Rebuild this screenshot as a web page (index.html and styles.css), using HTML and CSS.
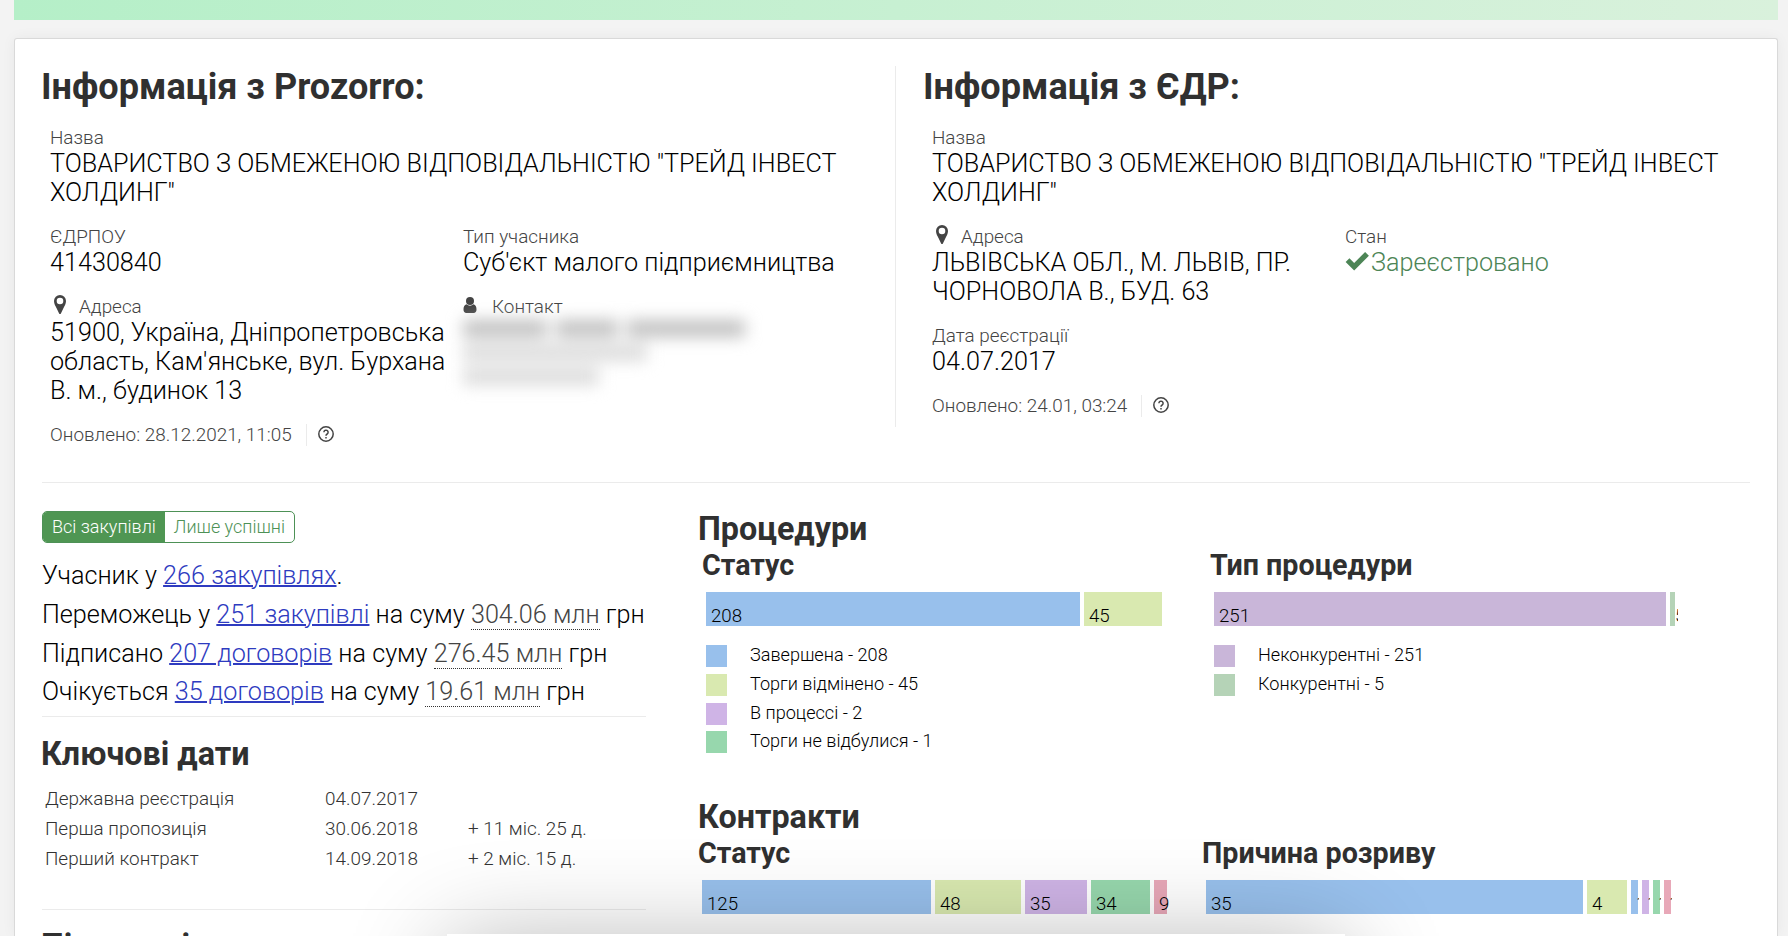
FILE: index.html
```html
<!DOCTYPE html>
<html lang="uk">
<head>
    <meta charset="UTF-8">
    <meta name="viewport" content="width=device-width, initial-scale=1.0">
    <title>Учасник 41430840</title>
    <link rel="stylesheet" href="styles.css">
</head>
<body>

    <div class="banner"></div>

    <div class="card">
        <div class="info">
            <section class="source">
                <h1>Інформація з Prozorro:</h1>
                <div class="fields">
                    <div class="field wide">
                        <label>Назва</label>
                        <p>ТОВАРИСТВО З ОБМЕЖЕНОЮ ВІДПОВІДАЛЬНІСТЮ "ТРЕЙД ІНВЕСТ ХОЛДИНГ"</p>
                    </div>
                    <div class="field">
                        <label>ЄДРПОУ</label>
                        <p>41430840</p>
                    </div>
                    <div class="field">
                        <label>Тип учасника</label>
                        <p>Суб'єкт малого підприємництва</p>
                    </div>
                    <div class="field">
                        <label><svg class="pin" viewBox="0 0 12 19"><path fill-rule="evenodd" d="M6 0a6 6 0 0 1 6 6c0 3-1.500 5-2.600 7.300L6.900 18.400a1 1 0 0 1-1.800 0L2.600 13.300C1.500 11 0 9 0 6a6 6 0 0 1 6-6zM6 2.700a3.300 3.300 0 1 0 0 6.600a3.300 3.300 0 0 0 0-6.600z"/></svg>Адреса</label>
                        <p>51900, Україна, Дніпропетровська область, Кам'янське, вул. Бурхана В. м., будинок 13</p>
                    </div>
                    <div class="field">
                        <label><svg class="user" viewBox="0 0 13 16"><circle cx="6.500" cy="4" r="4"/><path d="M3 7.200a5 5 0 0 0 7 0c2.300.4 3 2.800 3 5.600 0 2-1.100 3.200-2.800 3.200H2.800C1.100 16 0 14.800 0 12.800 0 10 .7 7.600 3 7.200z"/></svg>Контакт</label>
                        <div class="hidden-contact">
                            <div class="row"><i></i><i></i><i></i></div>
                            <div class="row light"><i></i></div>
                            <div class="row light short"><i></i></div>
                        </div>
                    </div>
                    <div class="updated wide">
                        <span>Оновлено: 28.12.2021, 11:05</span>
                        <svg class="help" viewBox="0 0 16 16"><circle cx="8" cy="8" r="7.200"/><path d="M5.900 6.200a2.100 2.100 0 1 1 3.300 1.800C8.400 8.500 8 8.900 8 9.700"/><path d="M8 11v1.500"/></svg>
                    </div>
                </div>
            </section>

            <section class="source">
                <h1>Інформація з ЄДР:</h1>
                <div class="fields">
                    <div class="field wide">
                        <label>Назва</label>
                        <p>ТОВАРИСТВО З ОБМЕЖЕНОЮ ВІДПОВІДАЛЬНІСТЮ "ТРЕЙД ІНВЕСТ ХОЛДИНГ"</p>
                    </div>
                    <div class="field">
                        <label><svg class="pin" viewBox="0 0 12 19"><path fill-rule="evenodd" d="M6 0a6 6 0 0 1 6 6c0 3-1.500 5-2.600 7.300L6.900 18.400a1 1 0 0 1-1.800 0L2.600 13.300C1.500 11 0 9 0 6a6 6 0 0 1 6-6zM6 2.700a3.300 3.300 0 1 0 0 6.600a3.300 3.300 0 0 0 0-6.600z"/></svg>Адреса</label>
                        <p>ЛЬВІВСЬКА ОБЛ., М. ЛЬВІВ, ПР. ЧОРНОВОЛА В., БУД. 63</p>
                    </div>
                    <div class="field">
                        <label>Стан</label>
                        <p class="registered"><svg class="check" viewBox="0 0 25 20"><path d="M0 10.500l4-4 5 5L20.500 0l4 4L9 19.500z"/></svg>Зареєстровано</p>
                    </div>
                    <div class="field wide">
                        <label>Дата реєстрації</label>
                        <p>04.07.2017</p>
                    </div>
                    <div class="updated wide">
                        <span>Оновлено: 24.01, 03:24</span>
                        <svg class="help" viewBox="0 0 16 16"><circle cx="8" cy="8" r="7.200"/><path d="M5.900 6.200a2.100 2.100 0 1 1 3.300 1.800C8.400 8.500 8 8.900 8 9.700"/><path d="M8 11v1.500"/></svg>
                    </div>
                </div>
            </section>
        </div>

        <div class="details">
            <div class="summary">
                <div class="toggle">
                    <button class="active">Всі закупівлі</button>
                    <button>Лише успішні</button>
                </div>
                <ul class="totals">
                    <li>Учасник у <a href="#">266 закупівлях</a>.</li>
                    <li>Переможець у <a href="#">251 закупівлі</a> на суму <abbr>304.06 млн</abbr> грн</li>
                    <li>Підписано <a href="#">207 договорів</a> на суму <abbr>276.45 млн</abbr> грн</li>
                    <li>Очікується <a href="#">35 договорів</a> на суму <abbr>19.61 млн</abbr> грн</li>
                </ul>
                <div class="dates">
                    <h2>Ключові дати</h2>
                    <div class="dates-grid">
                        <span>Державна реєстрація</span><span>04.07.2017</span><span></span>
                        <span>Перша пропозиція</span><span>30.06.2018</span><span>+ 11 міс. 25 д.</span>
                        <span>Перший контракт</span><span>14.09.2018</span><span>+ 2 міс. 15 д.</span>
                    </div>
                </div>
                <h2 class="next">Підписані</h2>
            </div>

            <div class="charts">
                <section class="procedures">
                    <h2>Процедури</h2>
                    <div class="pair">
                        <div class="chart">
                            <h3>Статус</h3>
                            <div class="bar">
                                <div class="blue" style="width: 374px"><span>208</span></div>
                                <div class="lime" style="width: 78px"><span>45</span></div>
                            </div>
                            <ul class="legend">
                                <li><i class="blue"></i>Завершена - 208</li>
                                <li><i class="lime"></i>Торги відмінено - 45</li>
                                <li><i class="violet"></i>В процессі - 2</li>
                                <li><i class="green"></i>Торги не відбулися - 1</li>
                            </ul>
                        </div>
                        <div class="chart">
                            <h3>Тип процедури</h3>
                            <div class="bar">
                                <div class="mauve" style="width: 452px"><span>251</span></div>
                                <div class="sage" style="width: 5px"><span class="cut">5</span></div>
                            </div>
                            <ul class="legend">
                                <li><i class="mauve"></i>Неконкурентні - 251</li>
                                <li><i class="sage"></i>Конкурентні - 5</li>
                            </ul>
                        </div>
                    </div>
                </section>

                <section class="contracts">
                    <h2>Контракти</h2>
                    <div class="pair">
                        <div class="chart">
                            <h3>Статус</h3>
                            <div class="bar">
                                <div class="blue" style="width: 229px"><span>125</span></div>
                                <div class="lime" style="width: 86px"><span>48</span></div>
                                <div class="violet" style="width: 62px"><span>35</span></div>
                                <div class="green" style="width: 59px"><span>34</span></div>
                                <div class="pink" style="width: 13px"><span>9</span></div>
                            </div>
                        </div>
                        <div class="chart">
                            <h3>Причина розриву</h3>
                            <div class="bar">
                                <div class="blue" style="width: 377px"><span>35</span></div>
                                <div class="lime" style="width: 40px"><span>4</span></div>
                                <div class="blue" style="width: 7px"><span class="cut">1</span></div>
                                <div class="violet" style="width: 7px"><span class="cut">1</span></div>
                                <div class="green" style="width: 7px"><span class="cut">1</span></div>
                                <div class="pink" style="width: 7px"><span class="cut">1</span></div>
                            </div>
                        </div>
                    </div>
                </section>
            </div>
        </div>
    </div>

    <div class="bottom-panel"></div>

</body>
</html>
```

FILE: styles.css
```css
* {
    box-sizing: border-box;
}
html {
    height: 936px;
    overflow: hidden;
}
body {
    margin: 0;
    height: 936px;
    overflow: hidden;
    position: relative;
    padding: 0 10px 0 14px;
    background-color: #f3f3f3;
    font-family: Roboto, sans-serif;
    font-weight: 300;
    font-size: 18.9px;
    color: #000;
}
h1, h2, h3, p, ul {
    margin: 0;
    padding: 0;
}
ul {
    list-style: none;
}
h1, h2, h3 {
    font-weight: 700;
    color: #303030;
}
h1 {
    font-size: 36.1px;
    line-height: 42px;
    margin-left: -1px;
}
h2 {
    font-size: 32.3px;
    line-height: 38px;
    margin-left: -1px;
}
h3 {
    font-size: 28.7px;
    line-height: 34px;
}

.banner {
    height: 20px;
    background: linear-gradient(to right, #b5efc8, #d9f1dc);
}
.card {
    height: 898px;
    margin-top: 18px;
    padding: 27px 27px 0;
    background-color: #fff;
    border: 1px solid #d9d9d9;
    border-bottom: none;
    border-radius: 3px 3px 0 0;
    box-shadow: 0 0 14px rgba(0, 0, 0, 0.05);
}

/* Two sources side by side */
.info {
    display: grid;
    grid-template-columns: 853px 1fr;
    height: 417px;
    border-bottom: 1px solid #ebebeb;
}
.source {
    height: 361px;
}
.source + .source {
    border-left: 1px solid #ebebeb;
    padding-left: 28px;
}
.fields {
    display: grid;
    grid-template-columns: 413px 413px;
    padding-left: 8px;
    margin-top: 19px;
}
.field {
    margin-bottom: 19px;
}
.wide {
    grid-column: span 2;
}
.field label {
    display: block;
    height: 22px;
    line-height: 22px;
    color: #444;
}
.field p {
    font-size: 25.2px;
    line-height: 29px;
}
.pin {
    width: 12px;
    height: 19px;
    margin: -4px 13px 0 4px;
    vertical-align: -1px;
    fill: #444;
}
.user {
    width: 14px;
    height: 16px;
    margin-right: 15px;
    fill: #444;
}
.check {
    width: 25px;
    height: 19px;
    margin-right: 1px;
    fill: #4d8556;
}
.field .registered {
    color: #4d8556;
}
.updated {
    display: flex;
    align-items: center;
    color: #444;
    line-height: 22px;
}
.updated span {
    padding-right: 14px;
    border-right: 1px solid #ebebeb;
}
.help {
    width: 16px;
    height: 16px;
    margin: 0 0 2px 11px;
    fill: none;
    stroke: #444;
    stroke-width: 1.5;
}
.hidden-contact {
    filter: blur(8px);
    padding-top: 2px;
}
.hidden-contact .row {
    display: flex;
    gap: 9px;
    margin-bottom: 7px;
}
.hidden-contact i {
    height: 17px;
    width: 84px;
    background: #c0c0c0;
}
.hidden-contact i:nth-child(2) {
    width: 62px;
}
.hidden-contact i:nth-child(3) {
    width: 118px;
}
.hidden-contact .light i {
    width: 184px;
    background: #dcdcdc;
}
.hidden-contact .short i {
    width: 136px;
}

.details {
    display: grid;
    grid-template-columns: 604px 1fr;
    column-gap: 53px;
}

/* Left column */
.summary {
    padding-top: 28px;
}
.toggle {
    display: flex;
    width: 253px;
    height: 32px;
    border: 1px solid #4d9156;
    border-radius: 5px;
    overflow: hidden;
}
.toggle button {
    padding: 0 9px 1px;
    border: none;
    background: none;
    font: inherit;
    font-size: 18px;
    color: #4d9156;
    white-space: nowrap;
}
.toggle .active {
    background-color: #4f9653;
    color: #fff;
}
.totals {
    padding: 14px 0 4px;
    border-bottom: 1px solid #ebebeb;
    font-size: 25.2px;
    line-height: 38.8px;
    white-space: nowrap;
}
.totals a {
    color: #2e3bc0;
    text-decoration-thickness: 2px;
}
.totals abbr {
    color: #444;
    border-bottom: 1px dotted #333;
}
.dates {
    height: 193px;
    padding-top: 18px;
    border-bottom: 1px solid #ebebeb;
}
.dates-grid {
    display: grid;
    grid-template-columns: 280px 143px 1fr;
    grid-auto-rows: 30px;
    align-items: center;
    margin-top: 10px;
    padding-left: 3px;
    color: #333;
}
.next {
    height: 10px;
    margin-top: 17px;
}

/* Right column */
.charts {
    padding-top: 27px;
}
.procedures {
    height: 288px;
}
.contracts {
    height: 120px;
}
.pair {
    display: grid;
    grid-template-columns: 508px 1fr;
}
.procedures .pair {
    padding-left: 3px;
}
.contracts .pair {
    grid-template-columns: 504px 1fr;
    margin-left: -1px;
}
.bar {
    display: flex;
    gap: 4px;
    height: 34px;
    margin: 10px 0 0 4px;
}
.bar div {
    flex: none;
    padding: 12px 0 0 5px;
}
.bar span {
    display: block;
    height: 22px;
    line-height: 25px;
    font-size: 18.7px;
}
.bar .cut {
    width: 3px;
    overflow: hidden;
}
.legend {
    margin: 15px 0 0 4px;
}
.legend li {
    display: flex;
    height: 28.8px;
    line-height: 27px;
    font-size: 18.1px;
}
.legend i {
    width: 21px;
    height: 22px;
    margin: 4px 23px 0 0;
}

.blue { background-color: #98c0ec; }
.lime { background-color: #d9e9b0; }
.violet { background-color: #cfb4e6; }
.green { background-color: #97d7ad; }
.pink { background-color: #e8a8b8; }
.mauve { background-color: #c9b6d9; }
.sage { background-color: #b5d3b7; }

/* Panel sliding in over the page */
.bottom-panel {
    position: absolute;
    left: 447px;
    top: 934px;
    width: 898px;
    height: 300px;
    background-color: #fff;
    box-shadow: 0 10px 100px rgba(0, 0, 0, 0.3);
}
```
